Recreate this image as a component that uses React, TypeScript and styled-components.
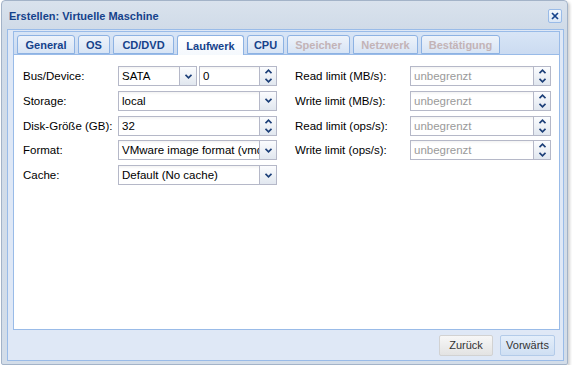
import React from "react";
import styled, { createGlobalStyle } from "styled-components";

const Global = createGlobalStyle`
  html, body {
    margin: 0;
    padding: 0;
    background: #ffffff;
  }
  body {
    font-family: "Liberation Sans", Arial, sans-serif;
  }
`;

const Win = styled.div`
  box-sizing: border-box;
  width: 567px;
  height: 365px;
  margin-left: 1px;
  border: 1px solid #a3b3c8;
  border-radius: 4px 4px 2px 2px;
  background: linear-gradient(#d9e2ed, #d0dbe8 28px, #d3dde9);
  padding: 0 3px 3px 5px;
  display: flex;
  flex-direction: column;
  box-shadow: 2px 2px 3px rgba(0, 0, 0, 0.18);
`;

const Header = styled.div`
  height: 28px;
  display: flex;
  align-items: center;
  justify-content: space-between;
  padding: 0 2px 0 2px;
`;

const Title = styled.span`
  font: bold 11px "Liberation Sans", Arial, sans-serif;
  color: #15428b;
  margin-top: 1px;
`;

const CloseBtn = styled.div`
  width: 12px;
  height: 12px;
  border: 1px solid #99bbe8;
  border-radius: 2px;
  background: linear-gradient(#f4f8fd, #dae6f6);
  display: flex;
  align-items: center;
  justify-content: center;
  margin-top: 2px;
`;

const Body = styled.div`
  flex: 1;
  border: 1px solid #99bbe8;
  background: #dfe8f6;
  display: flex;
  flex-direction: column;
  padding: 1px 2px 0 5px;
`;

const TabPanel = styled.div`
  width: 547px;
  flex: 1;
  display: flex;
  flex-direction: column;
`;

const TabStrip = styled.div`
  height: 19px;
  border: 1px solid #99bbe8;
  border-bottom: none;
  background: linear-gradient(#d8e5f6, #cbdbf1);
  padding: 3px 0 0 3px;
  display: flex;
  align-items: flex-end;
  gap: 3px;
`;

const Tab = styled.div<{ $active?: boolean; $off?: boolean; $w: number }>`
  box-sizing: border-box;
  width: ${(p) => p.$w}px;
  height: ${(p) => (p.$active ? 20 : 19)}px;
  margin-bottom: ${(p) => (p.$active ? -1 : 0)}px;
  border: 1px solid #8db2e3;
  border-bottom: ${(p) => (p.$active ? "none" : "1px solid #8db2e3")};
  border-radius: 3px 3px 0 0;
  background: ${(p) =>
    p.$active ? "linear-gradient(#ffffff, #f4f8fd)" : "linear-gradient(#eef3fa, #d7e4f5)"};
  display: flex;
  align-items: center;
  justify-content: center;
  font: bold 11px "Liberation Sans", Arial, sans-serif;
  color: ${(p) => (p.$off ? "#c3b3b6" : "#15428b")};
  padding-top: ${(p) => (p.$active ? 0 : 1)}px;
  position: relative;
  z-index: ${(p) => (p.$active ? 1 : 0)};
`;

const Content = styled.div`
  flex: 1;
  background: #ffffff;
  border: 1px solid #99bbe8;
  padding: 11px 9px 0 9px;
  display: grid;
  grid-template-columns: 254px 255px;
  column-gap: 18px;
  align-content: start;
`;

const Column = styled.div`
  display: flex;
  flex-direction: column;
  gap: 4.75px;
`;

const Row = styled.div<{ $label: number }>`
  display: grid;
  grid-template-columns: ${(p) => p.$label}px 1fr;
  align-items: center;
  height: 20px;
`;

const Label = styled.span`
  font: 11.5px "Liberation Sans", Arial, sans-serif;
  color: #000;
`;

const Fields = styled.div`
  display: flex;
  gap: 2px;
`;

const Box = styled.div<{ $w: number }>`
  box-sizing: border-box;
  width: ${(p) => p.$w}px;
  height: 20px;
  border: 1px solid #b5b8c8;
  background: linear-gradient(#f3f3f3, #ffffff 3px);
  display: flex;
  overflow: hidden;
`;

const Value = styled.span<{ $empty?: boolean }>`
  flex: 1;
  min-width: 0;
  padding: 0 3px;
  font: 11.5px "Liberation Sans", Arial, sans-serif;
  line-height: 18px;
  color: ${(p) => (p.$empty ? "#9a9a9a" : "#000")};
  white-space: nowrap;
  overflow: hidden;
`;

const Trigger = styled.div`
  width: 16px;
  flex: none;
  border-left: 1px solid #b5b8c8;
  background: linear-gradient(#fbfcfe, #e1e7ef);
  display: flex;
  flex-direction: column;
  align-items: center;
  justify-content: center;
`;

const SpinHalf = styled.div`
  flex: 1;
  display: flex;
  align-items: center;
  justify-content: center;
`;

const Footer = styled.div`
  height: 30px;
  display: flex;
  align-items: center;
  justify-content: flex-end;
  gap: 7px;
  padding-right: 6px;
`;

const Btn = styled.div<{ $primary?: boolean; $w: number }>`
  box-sizing: border-box;
  width: ${(p) => p.$w}px;
  height: 21px;
  border: 1px solid ${(p) => (p.$primary ? "#b3cbe9" : "#d2d2d2")};
  border-radius: 2px;
  background: ${(p) =>
    p.$primary ? "linear-gradient(#e4eefa, #cfdff3)" : "linear-gradient(#f7f7f7, #e3e3e3)"};
  display: flex;
  align-items: center;
  justify-content: center;
  font: 11px "Liberation Sans", Arial, sans-serif;
  color: #333;
`;

const Down = () => (
  <svg width="7" height="5" viewBox="0 0 7 5">
    <path d="M0.5 0.8 L3.5 3.8 L6.5 0.8" fill="none" stroke="#1c3f78" strokeWidth="1.7" />
  </svg>
);

const Up = () => (
  <svg width="7" height="5" viewBox="0 0 7 5">
    <path d="M0.5 4.2 L3.5 1.2 L6.5 4.2" fill="none" stroke="#1c3f78" strokeWidth="1.7" />
  </svg>
);

type FieldProps = { w: number; value: string; kind: "combo" | "spin" | "text"; empty?: boolean };

const Field = ({ w, value, kind, empty }: FieldProps) => (
  <Box $w={w}>
    <Value $empty={empty}>{value}</Value>
    {kind === "combo" && (
      <Trigger>
        <Down />
      </Trigger>
    )}
    {kind === "spin" && (
      <Trigger>
        <SpinHalf>
          <Up />
        </SpinHalf>
        <SpinHalf>
          <Down />
        </SpinHalf>
      </Trigger>
    )}
  </Box>
);

const tabs = [
  { t: "General", w: 58 },
  { t: "OS", w: 32 },
  { t: "CD/DVD", w: 61 },
  { t: "Laufwerk", w: 67, active: true },
  { t: "CPU", w: 37 },
  { t: "Speicher", w: 63, off: true },
  { t: "Netzwerk", w: 65, off: true },
  { t: "Bestätigung", w: 79, off: true },
];

const limits = ["Read limit (MB/s):", "Write limit (MB/s):", "Read limit (ops/s):", "Write limit (ops/s):"];

export default function App() {
  return (
    <>
      <Global />
      <Win>
        <Header>
          <Title>Erstellen: Virtuelle Maschine</Title>
          <CloseBtn>
            <svg width="8" height="8" viewBox="0 0 8 8">
              <path d="M1 1 L7 7 M7 1 L1 7" stroke="#15428b" strokeWidth="1.7" />
            </svg>
          </CloseBtn>
        </Header>
        <Body>
          <TabPanel>
            <TabStrip>
              {tabs.map((t) => (
                <Tab key={t.t} $w={t.w} $active={t.active} $off={t.off}>
                  {t.t}
                </Tab>
              ))}
            </TabStrip>
            <Content>
              <Column>
                <Row $label={95}>
                  <Label>Bus/Device:</Label>
                  <Fields>
                    <Field w={79} value="SATA" kind="combo" />
                    <Field w={78} value="0" kind="spin" />
                  </Fields>
                </Row>
                <Row $label={95}>
                  <Label>Storage:</Label>
                  <Field w={159} value="local" kind="combo" />
                </Row>
                <Row $label={95}>
                  <Label>Disk-Größe (GB):</Label>
                  <Field w={159} value="32" kind="spin" />
                </Row>
                <Row $label={95}>
                  <Label>Format:</Label>
                  <Field w={159} value="VMware image format (vmdk)" kind="combo" />
                </Row>
                <Row $label={95}>
                  <Label>Cache:</Label>
                  <Field w={159} value="Default (No cache)" kind="combo" />
                </Row>
              </Column>
              <Column>
                {limits.map((l) => (
                  <Row key={l} $label={115}>
                    <Label>{l}</Label>
                    <Field w={141} value="unbegrenzt" kind="spin" empty />
                  </Row>
                ))}
              </Column>
            </Content>
          </TabPanel>
          <Footer>
            <Btn $w={54}>Zurück</Btn>
            <Btn $w={55} $primary>
              Vorwärts
            </Btn>
          </Footer>
        </Body>
      </Win>
    </>
  );
}
